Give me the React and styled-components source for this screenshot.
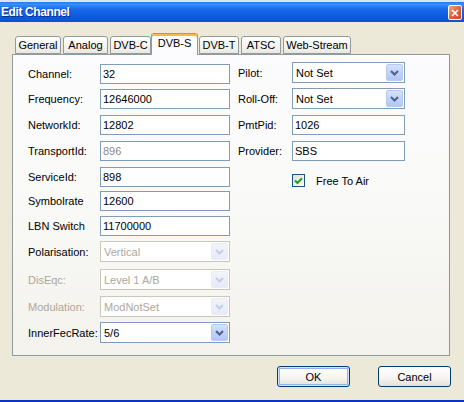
import styled, { createGlobalStyle } from "styled-components";

const GlobalStyle = createGlobalStyle`
  html, body {
    margin: 0;
    padding: 0;
    background: #ece9d8;
  }
  body {
    font-family: "Liberation Sans", Arial, sans-serif;
    font-size: 11px;
    color: #000;
  }
`;

const tabs = [
  { name: "General", w: 46 },
  { name: "Analog", w: 45 },
  { name: "DVB-C", w: 41 },
  { name: "DVB-S", w: 47, active: true },
  { name: "DVB-T", w: 40 },
  { name: "ATSC", w: 40 },
  { name: "Web-Stream", w: 68 },
];

const leftRows = [
  { label: "Channel:", value: "32", mt: 2 },
  { label: "Frequency:", value: "12646000", mt: 5 },
  { label: "NetworkId:", value: "12802", mt: 6 },
  { label: "TransportId:", value: "896", mt: 6, greyValue: true },
  { label: "ServiceId:", value: "898", mt: 6 },
  { label: "Symbolrate", value: "12600", mt: 4 },
  { label: "LBN Switch", value: "11700000", mt: 5 },
  { label: "Polarisation:", value: "Vertical", mt: 5, combo: true, disabled: true },
  { label: "DisEqc:", value: "Level 1 A/B", mt: 7, combo: true, disabled: true, greyLabel: true },
  { label: "Modulation:", value: "ModNotSet", mt: 6, combo: true, disabled: true, greyLabel: true },
  { label: "InnerFecRate:", value: "5/6", mt: 5, combo: true },
];

const rightRows = [
  { label: "Pilot:", value: "Not Set", mt: 0, combo: true },
  { label: "Roll-Off:", value: "Not Set", mt: 5, combo: true },
  { label: "PmtPid:", value: "1026", mt: 6 },
  { label: "Provider:", value: "SBS", mt: 6 },
];

const Window = styled.div`
  width: 464px;
  height: 402px;
  display: flex;
  flex-direction: column;
  background: #ece9d8;
  overflow: hidden;
`;

const TitleBar = styled.div`
  height: 20px;
  border-top: 2px solid #dfe3ea;
  display: flex;
  align-items: center;
  justify-content: space-between;
  padding: 0 2px 0 1px;
  background: linear-gradient(
    #2a78f0 0%,
    #3d8df7 12%,
    #1a6aeb 35%,
    #0a5ce2 70%,
    #0853d6 100%
  );
`;

const Title = styled.span`
  color: #fff;
  font-weight: bold;
  font-size: 12px;
  letter-spacing: -0.4px;
  text-shadow: 1px 1px 0 #0a2c84;
`;

const CloseButton = styled.div`
  width: 12px;
  height: 13px;
  margin-top: 1px;
  border: 1px solid #fff;
  border-radius: 2px;
  background: linear-gradient(135deg, #f0a890 0%, #e2623f 50%, #c9452a 100%);
  display: flex;
  align-items: center;
  justify-content: center;
`;

const Body = styled.div`
  flex: 1;
  display: flex;
  flex-direction: column;
  padding: 11px 14px 0 12px;
`;

const TabStrip = styled.div`
  height: 21px;
  display: flex;
  align-items: flex-end;
  gap: 2px;
  padding-left: 3px;
  position: relative;
  z-index: 1;
`;

const Tab = styled.div`
  box-sizing: border-box;
  width: ${(p) => p.$w}px;
  height: ${(p) => (p.$active ? 22 : 18)}px;
  margin: ${(p) => (p.$active ? "0 -1px -1px -2px" : "0")};
  border: 1px solid #919b9c;
  border-bottom: ${(p) => (p.$active ? "none" : "1px solid #919b9c")};
  border-radius: 3px 3px 0 0;
  display: flex;
  align-items: ${(p) => (p.$active ? "flex-start" : "center")};
  padding-top: ${(p) => (p.$active ? "3px" : "0")};
  justify-content: center;
  background: ${(p) =>
    p.$active ? "#fcfcfe" : "linear-gradient(#ffffff, #f3f2ee 60%, #e9e8e2)"};
  box-shadow: ${(p) =>
    p.$active ? "inset 0 2px 0 #f8b949" : "none"};
  border-top-color: ${(p) => (p.$active ? "#e68b2c" : "#919b9c")};
  white-space: nowrap;
`;

const Panel = styled.div`
  box-sizing: border-box;
  height: 302px;
  border: 1px solid #919b9c;
  border-right-color: #8c9597;
  background: linear-gradient(#fcfcfe, #f9f9f7 50%, #f3f2ec);
  display: flex;
  gap: 8px;
  padding: 7px 0 0 15px;
`;

const Column = styled.div`
  display: flex;
  flex-direction: column;
`;

const Row = styled.div`
  display: flex;
  align-items: center;
  margin-top: ${(p) => p.$mt}px;
`;

const Label = styled.span`
  width: ${(p) => p.$w}px;
  color: ${(p) => (p.$grey ? "#aca899" : "#000")};
  white-space: nowrap;
`;

const TextBox = styled.div`
  box-sizing: border-box;
  width: ${(p) => p.$w}px;
  height: 20px;
  border: 1px solid #7f9db9;
  background: #fff;
  padding-left: 2px;
  display: flex;
  align-items: center;
  color: ${(p) => (p.$grey ? "#8d8a80" : "#000")};
`;

const Combo = styled.div`
  box-sizing: border-box;
  width: ${(p) => p.$w}px;
  height: 21px;
  border: 1px solid ${(p) => (p.$disabled ? "#c9c7ba" : "#7f9db9")};
  background: #fff;
  display: flex;
  align-items: center;
  justify-content: space-between;
  padding: 1px;
  color: ${(p) => (p.$disabled ? "#aca899" : "#000")};
`;

const ComboText = styled.span`
  padding-left: 2px;
`;

const ArrowButton = styled.div`
  box-sizing: border-box;
  width: 17px;
  height: 17px;
  border-radius: 2px;
  border: 1px solid ${(p) => (p.$disabled ? "#e8ecf6" : "#b7c9f3")};
  background: ${(p) =>
    p.$disabled
      ? "linear-gradient(#f2f4fa, #e6ebf7)"
      : "linear-gradient(#d6e1fc, #c1d2fa 50%, #b3c7f6)"};
  display: flex;
  align-items: center;
  justify-content: center;
`;

const CheckRow = styled.div`
  display: flex;
  align-items: center;
  gap: 11px;
  margin-top: 13px;
  padding-left: 54px;
`;

const CheckBox = styled.div`
  box-sizing: border-box;
  width: 13px;
  height: 13px;
  border: 1px solid #1c5180;
  background: linear-gradient(135deg, #dcdcd7, #ffffff);
  display: flex;
  align-items: center;
  justify-content: center;
`;

const ButtonRow = styled.div`
  display: flex;
  justify-content: flex-end;
  gap: 28px;
  margin: 10px -1px 0 0;
`;

const Button = styled.div`
  box-sizing: border-box;
  width: 73px;
  height: 21px;
  border: 1px solid #003c74;
  border-radius: 3px;
  background: linear-gradient(#ffffff, #f5f4ef 60%, #e3e1d8);
  box-shadow: ${(p) =>
    p.$default ? "inset 0 0 0 1px #cee7ff, inset 0 0 0 2px #90b3e8" : "none"};
  display: flex;
  align-items: center;
  justify-content: center;
`;

const BottomEdge = styled.div`
  height: 2px;
  background: #0a34c8;
`;

const Chevron = ({ disabled }) => (
  <svg width="9" height="6" viewBox="0 0 9 6">
    <path
      d="M1 1 L4.5 4.5 L8 1"
      fill="none"
      stroke={disabled ? "#c3cde6" : "#4d6185"}
      strokeWidth="2"
    />
  </svg>
);

const Field = ({ row, labelW, inputW }) => (
  <Row $mt={row.mt}>
    <Label $w={labelW} $grey={row.greyLabel}>
      {row.label}
    </Label>
    {row.combo ? (
      <Combo $w={inputW} $disabled={row.disabled}>
        <ComboText>{row.value}</ComboText>
        <ArrowButton $disabled={row.disabled}>
          <Chevron disabled={row.disabled} />
        </ArrowButton>
      </Combo>
    ) : (
      <TextBox $w={inputW} $grey={row.greyValue}>
        {row.value}
      </TextBox>
    )}
  </Row>
);

const App = () => {
  return (
    <Window>
      <GlobalStyle />
      <TitleBar>
        <Title>Edit Channel</Title>
        <CloseButton>
          <svg width="8" height="8" viewBox="0 0 8 8">
            <path d="M1 1 L7 7 M7 1 L1 7" stroke="#fff" strokeWidth="1.6" />
          </svg>
        </CloseButton>
      </TitleBar>
      <Body>
        <TabStrip>
          {tabs.map((t) => (
            <Tab key={t.name} $w={t.w} $active={t.active}>
              {t.name}
            </Tab>
          ))}
        </TabStrip>
        <Panel>
          <Column>
            {leftRows.map((r) => (
              <Field key={r.label} row={r} labelW={72} inputW={130} />
            ))}
          </Column>
          <Column>
            {rightRows.map((r) => (
              <Field key={r.label} row={r} labelW={54} inputW={113} />
            ))}
            <CheckRow>
              <CheckBox>
                <svg width="9" height="8" viewBox="0 0 9 8">
                  <path
                    d="M1 3.5 L3.5 6 L8 1.2"
                    fill="none"
                    stroke="#21a121"
                    strokeWidth="2"
                  />
                </svg>
              </CheckBox>
              <span>Free To Air</span>
            </CheckRow>
          </Column>
        </Panel>
        <ButtonRow>
          <Button $default>OK</Button>
          <Button>Cancel</Button>
        </ButtonRow>
      </Body>
      <BottomEdge />
    </Window>
  );
};

export default App;
